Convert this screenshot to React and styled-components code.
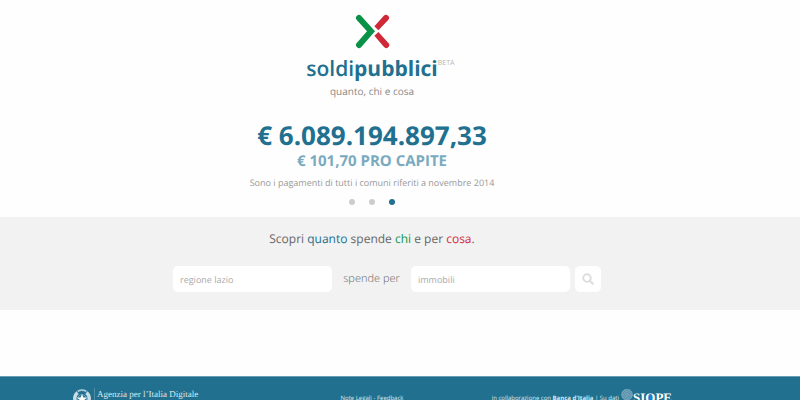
import { useState } from "react";
import styled, { createGlobalStyle } from "styled-components";

const SLIDES = ["Regioni", "Province", "Comuni"];

function LogoMark() {
  return (
    <svg width="36" height="36" viewBox="0 0 36 36" fill="none" aria-hidden="true">
      <path d="M5 4 L17 17.2 L5 31" stroke="#099247" strokeWidth="6" strokeLinecap="round" />
      <path
        d="M29.8 1.8 a3 3 0 0 1 4.4 4.1 L24.4 16.2 L20.4 12.2 Z M20.4 21.8 L24.4 18 L34.4 29 a3 3 0 0 1 -4.4 4.1 Z"
        fill="#cf2837"
      />
    </svg>
  );
}

function SearchIcon() {
  return (
    <svg width="12" height="12" viewBox="0 0 12 12" fill="none" stroke="#dcdcdc" aria-hidden="true">
      <circle cx="5" cy="5" r="3.8" strokeWidth="1.8" />
      <path d="M8 8 L10.8 10.8" strokeWidth="2" strokeLinecap="round" />
    </svg>
  );
}

function Emblem() {
  return (
    <svg width="18" height="20" viewBox="0 0 18 20" fill="none" aria-hidden="true">
      <path d="M5 17 A7.2 7.6 0 0 1 4.6 4.6" stroke="#c9dde6" strokeWidth="3.4" />
      <path d="M13 17 A7.2 7.6 0 0 0 13.4 4.6" stroke="#c9dde6" strokeWidth="3.4" />
      <path d="M4.6 3.4 Q9 1 13.4 3.4" stroke="#a9c8d6" strokeWidth="1.8" />
      <circle cx="9" cy="11" r="4.4" stroke="#6fa3b8" strokeWidth="1" />
      <path d="M9 6 L10.4 9.4 L14 9.6 L11.2 12 L12.2 16 L9 13.6 L5.8 16 L6.8 12 L4 9.6 L7.6 9.4 Z" fill="#ffffff" />
      <path d="M4 18.8 H14" stroke="#c9dde6" strokeWidth="1.6" />
    </svg>
  );
}

function SiopeMark() {
  return (
    <svg width="12" height="15" viewBox="0 0 14 16" fill="none" stroke="#7fabc0" aria-hidden="true">
      <circle cx="7" cy="7" r="6.4" fill="#5b95ad" stroke="none" />
      <circle cx="7" cy="7" r="6" strokeWidth="1.4" strokeDasharray="1.4 0.6" />
      <circle cx="7" cy="7" r="3.8" strokeWidth="1" strokeDasharray="1.6 0.6" />
      <circle cx="7" cy="7" r="1.6" strokeWidth="1" />
      <path d="M4 13 L7 15.4 L10 13" strokeWidth="1.2" />
    </svg>
  );
}

function App() {
  const [slide, setSlide] = useState(2);
  const [who, setWho] = useState("");
  const [what, setWhat] = useState("");

  return (
    <>
      <GlobalStyle />
      <Hero>
        <LogoMark />
        <Brand>
          soldi<strong>pubblici</strong>
          <Beta>BETA</Beta>
        </Brand>
        <Tagline>quanto, chi e cosa</Tagline>
        <Amount>€ 6.089.194.897,33</Amount>
        <PerCapita>€ 101,70 PRO CAPITE</PerCapita>
        <Note>Sono i pagamenti di tutti i comuni riferiti a novembre 2014</Note>
        <Dots>
          {SLIDES.map((name, index) => (
            <Dot
              key={name}
              type="button"
              aria-label={name}
              $active={index === slide}
              onClick={() => setSlide(index)}
            />
          ))}
        </Dots>
      </Hero>

      <SearchSection>
        <SearchTitle>
          Scopri <Word $color="#21708f">quanto</Word> spende <Word $color="#0f9648">chi</Word> e per{" "}
          <Word $color="#d02c3c">cosa</Word>.
        </SearchTitle>
        <SearchForm onSubmit={(event) => event.preventDefault()}>
          <SearchInput
            aria-label="chi"
            placeholder="regione lazio"
            value={who}
            onChange={(event) => setWho(event.target.value)}
          />
          <Joiner htmlFor="cosa">spende per</Joiner>
          <SearchInput
            id="cosa"
            placeholder="immobili"
            value={what}
            onChange={(event) => setWhat(event.target.value)}
          />
          <SearchButton type="submit" aria-label="Cerca">
            <SearchIcon />
          </SearchButton>
        </SearchForm>
      </SearchSection>

      <Footer>
        <Agency href="#agid">
          <Emblem />
          <AgencyName>Agenzia per l’Italia Digitale</AgencyName>
        </Agency>
        <FooterLinks>
          <a href="#note">Note Legali</a> - <a href="#feedback">Feedback</a>
        </FooterLinks>
        <Partner>
          <span>
            in collaborazione con <strong>Banca d'Italia</strong> | Su dati
          </span>
          <Siope href="#siope">
            <SiopeMark />
            <span>
              SI<SiopeRing>O</SiopeRing>PE
            </span>
          </Siope>
        </Partner>
      </Footer>
    </>
  );
}

const GlobalStyle = createGlobalStyle`
  * {
    box-sizing: border-box;
  }

  body {
    margin: 0;
    background-color: #fefefe;
    font-family: "Open Sans", "Noto Sans", sans-serif;
    color: #666;
    text-rendering: geometricPrecision;
  }

  a {
    color: inherit;
    text-decoration: none;
  }
`;

const Hero = styled.header`
  display: flex;
  flex-direction: column;
  align-items: center;
  padding: 14px 56px 12px 0;
  text-align: center;
`;

const Brand = styled.h1`
  position: relative;
  margin: 6px 0 0;
  font-size: 21px;
  line-height: 26px;
  font-weight: 600;
  color: #21708f;

  strong {
    font-weight: 700;
  }
`;

const Beta = styled.sup`
  position: absolute;
  top: 4px;
  left: 100%;
  font-size: 7px;
  line-height: 8px;
  font-weight: 400;
  color: #b5b5b5;
`;

const Tagline = styled.p`
  margin: 0;
  font-size: 10px;
  line-height: 18px;
  font-weight: 400;
  color: #888;
`;

const Amount = styled.p`
  margin: 17px 0 0;
  font-size: 26px;
  line-height: 36px;
  font-weight: 700;
  color: #21708f;
`;

const PerCapita = styled.p`
  margin: 0;
  font-size: 15px;
  line-height: 16px;
  font-weight: 700;
  color: #7aaabf;
`;

const Note = styled.p`
  margin: 4px 0 0;
  font-size: 9px;
  line-height: 20px;
  font-weight: 400;
  color: #999;
`;

const Dots = styled.div`
  display: flex;
  gap: 14px;
  margin-top: 6px;
`;

const Dot = styled.button`
  width: 6px;
  height: 6px;
  padding: 0;
  border: none;
  border-radius: 50%;
  background-color: ${({ $active }) => ($active ? "#21708f" : "#ccc")};
  cursor: pointer;
`;

const SearchSection = styled.section`
  padding: 12px 0 18px;
  background-color: #f2f2f2;
`;

const SearchTitle = styled.h2`
  margin: 0;
  padding-right: 56px;
  font-size: 12px;
  line-height: 20px;
  font-weight: 400;
  text-align: center;
`;

const Word = styled.span`
  color: ${({ $color }) => $color};
`;

const SearchForm = styled.form`
  display: flex;
  justify-content: center;
  align-items: center;
  margin-top: 17px;
  padding-right: 26px;
`;

const SearchInput = styled.input`
  width: 159px;
  height: 26px;
  padding: 0 7px;
  border: none;
  border-radius: 5px;
  background-color: #fff;
  font-family: inherit;
  font-size: 9px;
  color: #666;
  text-rendering: inherit;

  &::placeholder {
    color: #aaa;
    opacity: 1;
  }
`;

const Joiner = styled.label`
  width: 79px;
  font-size: 11px;
  line-height: 20px;
  font-weight: 300;
  text-align: center;
`;

const SearchButton = styled.button`
  display: flex;
  justify-content: center;
  align-items: center;
  width: 26px;
  height: 26px;
  margin-left: 5px;
  padding: 0;
  border: none;
  border-radius: 5px;
  background-color: #fff;
  cursor: pointer;
`;

const Footer = styled.footer`
  display: grid;
  grid-template-columns: 1fr auto 1fr;
  align-items: start;
  margin-top: 66px;
  padding: 11px 56px 12px 0;
  border-top: 1px solid #6a9db3;
  background-color: #21708f;
  font-size: 6px;
  line-height: 20px;
  color: #dce9ee;
`;

const Agency = styled.a`
  display: flex;
  gap: 3px;
  padding-left: 73px;
`;

const AgencyName = styled.span`
  padding-left: 2px;
  border-left: 1px solid #4d8ca6;
  font-family: "Liberation Serif", serif;
  font-size: 9px;
  line-height: 12px;
`;

const FooterLinks = styled.nav`
  text-align: center;
`;

const Partner = styled.div`
  display: flex;
  justify-content: flex-end;
  gap: 2px;
  padding-right: 72px;
  white-space: nowrap;
`;

const Siope = styled.a`
  display: flex;
  font-family: "Liberation Serif", serif;
  font-size: 13px;
  font-weight: 700;
  color: #fff;
`;

const SiopeRing = styled.span`
  background: radial-gradient(circle, #1483d6 0 2px, transparent 3px);
`;

export default App;
